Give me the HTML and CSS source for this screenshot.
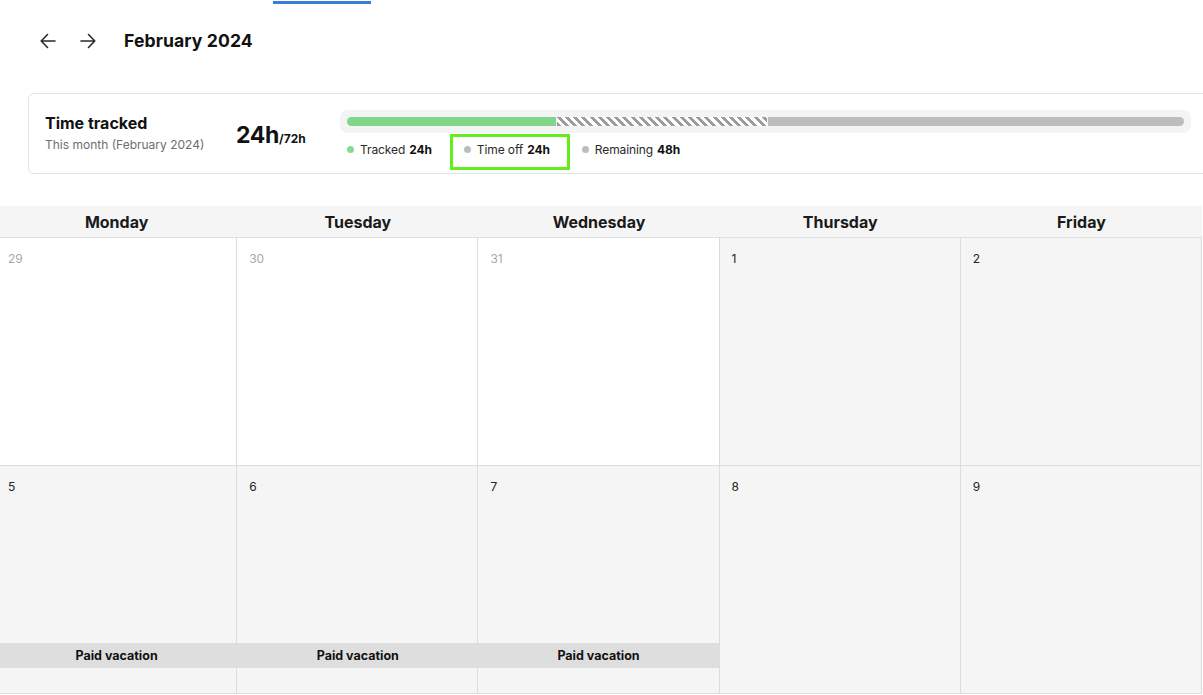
FILE: index.html
```html
<!DOCTYPE html>
<html lang="en">
<head>
<meta charset="utf-8">
<title>February 2024</title>
<link rel="stylesheet" href="styles.css">
</head>
<body>
<div class="tabs"><span class="tab-indicator"></span></div>

<div class="toolbar">
  <button class="nav-btn" aria-label="Previous month">
    <svg width="16" height="16" viewBox="0 0 16 16" fill="none" stroke="currentColor" stroke-width="1.6" stroke-linecap="round" stroke-linejoin="round"><path d="M15 8H1.2M7.5 1.5L1.2 8l6.3 6.5"/></svg>
  </button>
  <button class="nav-btn" aria-label="Next month">
    <svg width="16" height="16" viewBox="0 0 16 16" fill="none" stroke="currentColor" stroke-width="1.6" stroke-linecap="round" stroke-linejoin="round"><path d="M1 8h13.8M8.5 1.5L14.8 8l-6.3 6.5"/></svg>
  </button>
  <h1 class="month-title">February 2024</h1>
</div>

<section class="summary-card">
  <div class="summary-label">
    <div class="summary-title">Time tracked</div>
    <div class="summary-sub">This month (February 2024)</div>
  </div>
  <div class="summary-total"><span class="total-main">24h</span><span class="total-of">/72h</span></div>
  <div class="summary-progress">
    <div class="track">
      <div class="bar">
        <span class="seg seg-tracked"></span>
        <span class="seg seg-off"></span>
        <span class="seg seg-remaining"></span>
      </div>
    </div>
    <div class="legend">
      <span class="legend-item"><i class="dot dot-tracked"></i>Tracked <b>24h</b></span>
      <span class="legend-item is-focused"><i class="dot dot-grey"></i>Time off <b>24h</b></span>
      <span class="legend-item"><i class="dot dot-grey"></i>Remaining <b>48h</b></span>
    </div>
  </div>
</section>

<section class="calendar">
  <div class="weekday">Monday</div>
  <div class="weekday">Tuesday</div>
  <div class="weekday">Wednesday</div>
  <div class="weekday">Thursday</div>
  <div class="weekday">Friday</div>

  <div class="day outside"><span class="num">29</span></div>
  <div class="day outside"><span class="num">30</span></div>
  <div class="day outside"><span class="num">31</span></div>
  <div class="day"><span class="num">1</span></div>
  <div class="day"><span class="num">2</span></div>

  <div class="day"><span class="num">5</span><div class="event">Paid vacation</div></div>
  <div class="day"><span class="num">6</span><div class="event">Paid vacation</div></div>
  <div class="day"><span class="num">7</span><div class="event">Paid vacation</div></div>
  <div class="day"><span class="num">8</span></div>
  <div class="day"><span class="num">9</span></div>
</section>
</body>
</html>
```

FILE: styles.css
```css
* { box-sizing: border-box; }

html, body {
  margin: 0;
  background: #fff;
  overflow: hidden;
}

body {
  font-family: Inter, "Liberation Sans", sans-serif;
  color: #111;
  width: 1203px;
  height: 695px;
}

/* tab strip above the toolbar */
.tabs {
  height: 4px;
  padding-left: 273px;
  padding-top: 1px;
}
.tab-indicator {
  display: block;
  width: 98px;
  height: 3px;
  background: #3b7bd9;
}

/* month navigation */
.toolbar {
  display: flex;
  align-items: center;
  height: 73px;
  padding-left: 36px;
}
.nav-btn {
  width: 24px;
  height: 24px;
  padding: 0;
  border: 0;
  background: transparent;
  color: #2b2b2b;
  display: flex;
  align-items: center;
  justify-content: center;
  margin-right: 16px;
}
.nav-btn + .nav-btn { margin-right: 24px; }
.month-title {
  margin: 0;
  font-size: 17.6px;
  font-weight: 700;
  letter-spacing: 0.1px;
  color: #111;
}

/* summary card */
.summary-card {
  margin: 16px -5px 0 28px;
  height: 81px;
  border: 1px solid #e3e3e3;
  border-radius: 6px;
  display: flex;
  align-items: center;
  padding: 0 16px;
}
.summary-label {
  width: 191px;
  padding-bottom: 3px;
}
.summary-title {
  font-size: 16px;
  font-weight: 700;
  line-height: 20px;
  color: #111;
}
.summary-sub {
  margin-top: 4px;
  font-size: 12px;
  line-height: 15px;
  color: #6e6e6e;
}
.summary-total {
  width: 104px;
  padding-top: 2px;
  white-space: nowrap;
}
.total-main {
  font-size: 23px;
  font-weight: 700;
  letter-spacing: -0.3px;
}
.total-of {
  font-size: 12px;
  font-weight: 700;
}

.summary-progress {
  flex: 1;
  margin-top: -1px;
}
.track {
  background: #f4f4f4;
  border-radius: 8px;
  padding: 7px;
  height: 23px;
}
.bar {
  display: flex;
  gap: 1px;
  height: 9px;
}
.seg { display: block; height: 100%; }
.seg-tracked {
  flex: 0 0 25%;
  background: #7fd68b;
  border-radius: 5px 0 0 5px;
}
.seg-off {
  flex: 0 0 25%;
  background: repeating-linear-gradient(45deg, #9c9c9c 0 2.9px, #fff 2.9px 5.8px);
}
.seg-remaining {
  flex: 1;
  background: #bcbcbc;
  border-radius: 0 5px 5px 0;
}

.legend {
  display: flex;
  gap: 32px;
  margin-top: 10px;
  padding-left: 7px;
  font-size: 12px;
  line-height: 14px;
  color: #2a2a2a;
  letter-spacing: -0.1px;
}
.legend-item {
  display: flex;
  align-items: center;
  white-space: nowrap;
  position: relative;
}
.legend-item b {
  font-weight: 700;
  color: #111;
  margin-left: 4px;
}
.dot {
  display: inline-block;
  width: 7px;
  height: 7px;
  border-radius: 50%;
  margin-right: 6px;
}
.dot-tracked { background: #86d893; }
.dot-grey { background: #bdbdbd; }

/* focus ring drawn over the highlighted legend entry */
.legend-item.is-focused::after {
  content: "";
  position: absolute;
  left: -14px;
  right: -20px;
  top: -9px;
  bottom: -13px;
  border: 3px solid #62ee1c;
}

/* month grid */
.calendar {
  margin: 32px 0 0 -4px;
  width: 1206px;
  display: grid;
  grid-template-columns: repeat(5, 1fr);
  grid-template-rows: 32px 228px 228px;
}
.weekday {
  background: #f5f5f5;
  border-bottom: 1px solid #e0e0e0;
  font-size: 16px;
  font-weight: 700;
  color: #1a1a1a;
  display: flex;
  align-items: center;
  justify-content: center;
  padding-top: 1px;
}
.day {
  background: #f5f5f5;
  border-right: 1px solid #dcdcdc;
  border-bottom: 1px solid #dcdcdc;
  display: flex;
  flex-direction: column;
  padding-top: 14px;
}
.day.outside { background: #fff; }
.num {
  font-size: 12px;
  line-height: 14px;
  padding-left: 12px;
  color: #222;
}
.day.outside .num { color: #a8a8a8; }

.event {
  margin-top: auto;
  margin-bottom: 25px;
  margin-right: -1px;
  height: 25px;
  background: #dedede;
  font-size: 12.5px;
  font-weight: 700;
  color: #111;
  display: flex;
  align-items: center;
  justify-content: center;
  position: relative;
}
.day:nth-child(13) .event { margin-right: 0; }
```
